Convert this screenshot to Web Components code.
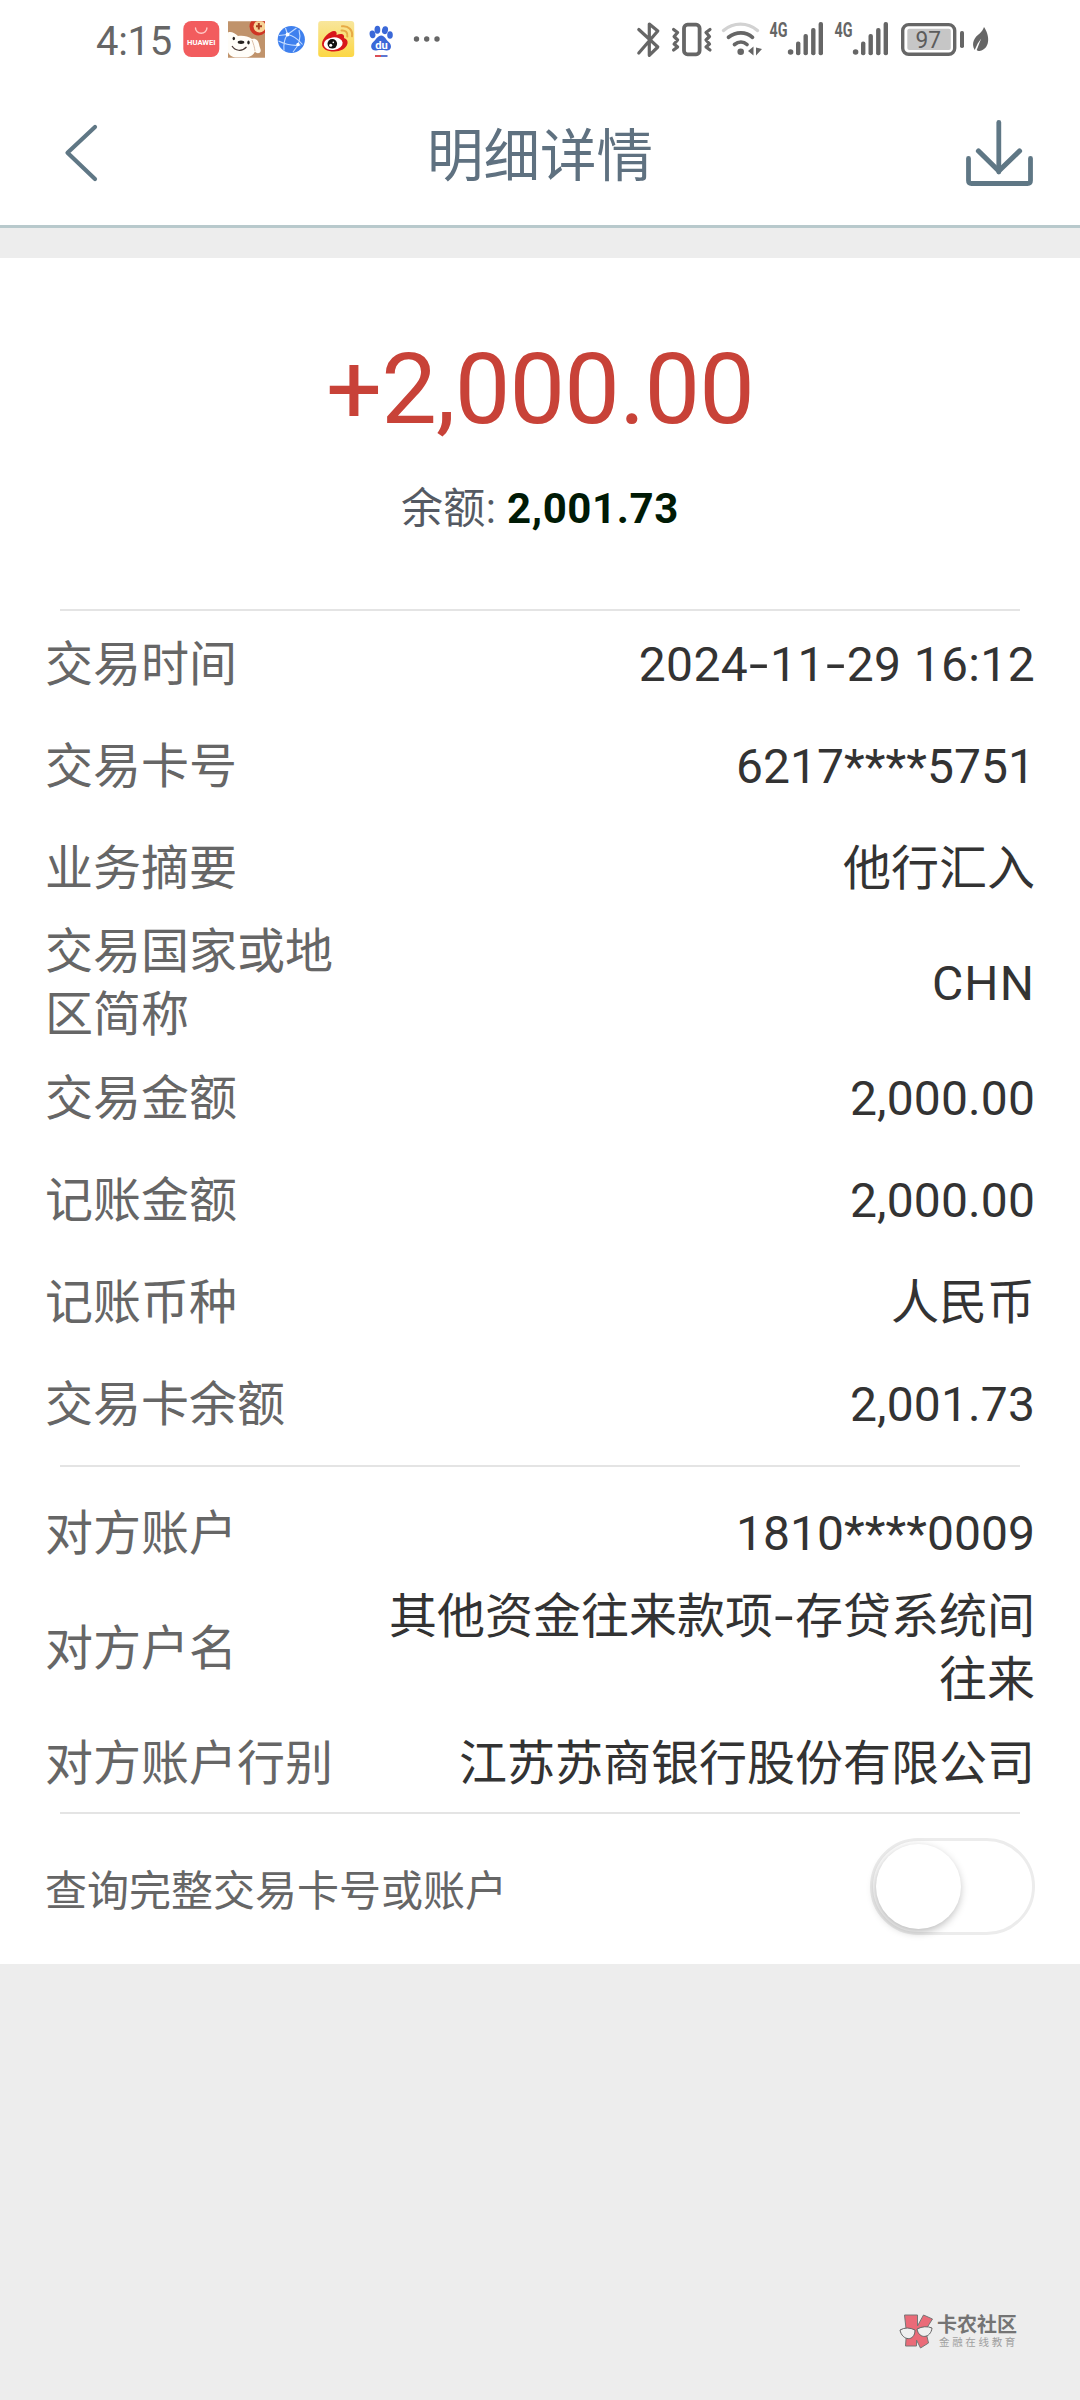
<!DOCTYPE html>
<html lang="zh-CN">
<head>
<meta charset="utf-8">
<title>明细详情</title>
<style>
  html, body { margin: 0; padding: 0; }
  body { background: #ededed; font-family: Roboto, "Noto Sans CJK SC", sans-serif; width: 1080px; height: 2400px; overflow: hidden; }
</style>
</head>
<body>
<bank-app></bank-app>
<script>
const define = (name, html, extra) => customElements.define(name, class extends HTMLElement {
  constructor() {
    super();
    this.attachShadow({ mode: 'open' }).innerHTML = html;
  }
  connectedCallback() { if (extra) extra.call(this, this.shadowRoot); }
});

/* Sets its text to a given advance width by spreading the letters */
define('fit-text', `<style>:host{display:inline-block;white-space:pre}span{display:inline-block}</style><span><slot></slot></span>`,
  function (root) {
    const s = root.querySelector('span');
    const w = parseFloat(this.getAttribute('w'));
    const n = this.textContent.length;
    const ls = (w - s.getBoundingClientRect().width) / n;
    s.style.letterSpacing = ls + 'px';
  });

const signal = (x) => `
  <svg width="57" height="80" viewBox="${x} 0 57 80" fill="#666">
    <text x="${x + 1.5}" y="37" font-size="20.5" font-weight="700" textLength="18" lengthAdjust="spacingAndGlyphs">4G</text>
    <circle cx="${x + 22.6}" cy="52" r="2.8"/>
    <rect x="${x + 28}" y="41.5" width="4.4" height="13.7" rx="2"/>
    <rect x="${x + 35.5}" y="34" width="4.4" height="21.2" rx="2"/>
    <rect x="${x + 43.1}" y="28" width="4.4" height="27.2" rx="2"/>
    <rect x="${x + 50.6}" y="22" width="4.4" height="33.2" rx="2"/>
  </svg>`;

define('status-bar', `
<style>
  :host{display:flex;height:80px;box-sizing:border-box;padding-left:96px;background:#fff;color:#666;align-items:flex-start}
  svg{display:block;flex:none;overflow:visible}
  fit-text{font-size:40px;line-height:80px;margin-top:2px;height:78px;margin-right:11px}
  .g{display:flex}
  .r{margin-left:195px}
</style>
<fit-text w="76">4:15</fit-text>
<div class="g">
  <svg width="37" height="80" viewBox="183 0 37 80" style="margin-right:8px">
    <rect x="183.3" y="21" width="36" height="36" rx="8" fill="#f25c5e"/>
    <path d="M195.5 28a5.7 5.2 0 0 0 11.4 0" fill="none" stroke="#ffc9c6" stroke-width="1.4" stroke-linecap="round"/>
    <text x="187" y="44.7" font-size="6.8" font-weight="700" fill="#fff" textLength="28.6" lengthAdjust="spacingAndGlyphs">HUAWEI</text>
  </svg>
  <svg width="38" height="80" viewBox="228 0 38 80" style="margin-right:11px">
    <clipPath id="jd"><rect x="228" y="21.3" width="37" height="36.4"/></clipPath>
    <g clip-path="url(#jd)">
      <rect x="228" y="21" width="37" height="37" fill="#c0936b"/>
      <circle cx="258.5" cy="26.5" r="9" fill="#cf3524"/>
      <circle cx="259.5" cy="26.5" r="6" fill="#f7d397"/>
      <path d="M258.8 23v6.6M256 26.3h6" stroke="#a9401f" stroke-width="2"/>
      <path d="M227 33c3-2.500 8 0 11 3 5-.5 10 0 14 3 4-1 6 1 7 5 .5 4 3 6 1 8.500-2 1.500-4 .5-5-1-1 3-4 5-8 6h-12c-5-1-8-5-8-10z" fill="#fffdf8"/>
      <path d="M252 40c1.500 4 2.500 7 3 11" fill="none" stroke="#d7b9a0" stroke-width=".9"/>
      <ellipse cx="241" cy="42.300" rx="3.300" ry="1.700" fill="#25211f"/>
      <ellipse cx="233.800" cy="38.500" rx="1.200" ry="1.700" fill="#25211f"/>
      <ellipse cx="248.500" cy="42.500" rx="1.200" ry="1.900" fill="#25211f"/>
      <path d="M232 46c3 5 10 6 14.500 1" fill="none" stroke="#463733" stroke-width="1.200"/>
    </g>
  </svg>
  <svg width="28" height="80" viewBox="277 0 28 80" style="margin-right:13px">
    <circle cx="291.300" cy="39.500" r="13.600" fill="#3f80ee"/>
    <g fill="none" stroke="#c5dcff" stroke-width="1.100">
      <path d="M287.500 34.500l9-6.500M287.500 34.500l-8.500 1M287.500 34.500l-2-6.500M287.500 34.500c5 1 11 5 15 10M287.500 34.500c-3 4-4 10-3.500 16M278.500 41c8 4 15 5 22 4M299 30c2 7 .5 15-6 22"/>
    </g>
    <circle cx="287.500" cy="34.500" r="1.900" fill="#fff"/><circle cx="298" cy="44.500" r="1.700" fill="#fff"/>
  </svg>
  <svg width="37" height="80" viewBox="318 0 37 80" style="margin-right:14px">
    <defs><linearGradient id="wb" x1="0" y1="0" x2="0" y2="1"><stop offset="0" stop-color="#f8e69c"/><stop offset="1" stop-color="#fcd745"/></linearGradient></defs>
    <rect x="318.200" y="21" width="36" height="36" rx="3" fill="url(#wb)"/>
    <path d="M322 44c0-6 8-13 12-13 2.500 0 3 2 2.500 4 4-2 8.500-1.500 7.500 3 3 1 4 3 3.500 5.500-1 5-7 8-13.500 8s-12-2.500-12-7.500z" fill="#d8161b"/>
    <ellipse cx="333.200" cy="43.700" rx="9.500" ry="6.300" fill="#fff" transform="rotate(-7 333.200 43.700)"/>
    <circle cx="332.300" cy="43.800" r="4.800" fill="#111"/><circle cx="330.700" cy="45.300" r="1.500" fill="#fff"/><circle cx="333.300" cy="42.400" r=".8" fill="#fff"/>
    <path d="M341.500 30.500c4-.5 6.500 2 5.800 6M342 26.300c6.500-.8 11 3.800 10 10" fill="none" stroke="#e7aa45" stroke-width="2" stroke-linecap="round"/>
  </svg>
  <svg width="25" height="80" viewBox="369 0 25 80" style="margin-right:19px">
    <g fill="#3a68d8">
      <ellipse cx="372.500" cy="34.300" rx="2.900" ry="3.900" transform="rotate(-10 372.500 34.300)"/>
      <ellipse cx="377.400" cy="29.800" rx="2.900" ry="4"/>
      <ellipse cx="385" cy="30.200" rx="3" ry="4" transform="rotate(12 385 30.200)"/>
      <ellipse cx="390" cy="35" rx="2.800" ry="3.800"/>
      <path d="M381.200 35.500c3.500 0 4.500 4 7.500 6.500 4 3.500 2.500 9-2.500 8.500-3.500-.6-6.500-.6-10 0-5 .5-6.800-5-3-8.500 3-2.500 4.500-6.500 8-6.500z"/>
    </g>
    <text x="375.200" y="48.500" font-size="10.500" font-weight="700" fill="#fff" textLength="12.500" lengthAdjust="spacingAndGlyphs">du</text>
    <path d="M375 56h6" stroke="#d93c43" stroke-width="1.800"/><path d="M381 56h6.500" stroke="#4a68cf" stroke-width="1.800"/>
  </svg>
  <svg width="28" height="80" viewBox="413 0 28 80" fill="#666"><circle cx="416.500" cy="39" r="2.700"/><circle cx="426.700" cy="39" r="2.700"/><circle cx="437" cy="39" r="2.700"/></svg>
</div>
<div class="g r">
  <svg width="26" height="80" viewBox="636 0 26 80" style="margin-right:9px">
    <path d="M638.800 29.500l19 17.500-8.500 8.300V24l8.500 7-19 22" fill="none" stroke="#666" stroke-width="3.200" stroke-linejoin="round" stroke-linecap="round"/>
  </svg>
  <svg width="41" height="80" viewBox="671 0 41 80" style="margin-right:8px" fill="none" stroke="#666">
    <rect x="684" y="24.700" width="15.600" height="29.600" rx="3.500" stroke-width="3.800"/>
    <path d="M673.600 29.500l4 3-3.500 4 3.500 3.500-3.500 4 3.500 3-4 3M710 29.500l-4 3 3.500 4-3.500 3.500 3.500 4-3.500 3 4 3" stroke-width="3.200" stroke-linejoin="round" stroke-linecap="round"/>
  </svg>
  <svg width="44" height="80" viewBox="720 0 44 80" style="margin-right:4px" fill="none" stroke-linecap="round">
    <path d="M723.500 30.500c10-8.500 24-8.500 34 0" stroke="#d2d2d2" stroke-width="3.400"/>
    <path d="M728.500 37.300c7.500-6 17.500-6 24 0" stroke="#666" stroke-width="3.700"/>
    <path d="M734.500 44.500c4-3.300 9-3.300 12.500 0" stroke="#666" stroke-width="3.700"/>
    <circle cx="740.700" cy="51.700" r="3.300" fill="#666"/>
    <path d="M753.500 46.500v9l-5.500-4.500zM756 47.500v8l6-6.500z" fill="#666"/>
  </svg>
  ${signal(768)}
  <span style="width:8px"></span>
  ${signal(833)}
  <svg width="66" height="80" viewBox="900 0 66 80" style="margin-left:10px;margin-right:5px">
    <rect x="902.700" y="24.600" width="52" height="29.600" rx="6" fill="none" stroke="#666" stroke-width="3.400"/>
    <rect x="907.300" y="28.800" width="43.500" height="21.200" rx="2" fill="#c6c6c6"/>
    <text x="915.500" y="48.300" font-size="23.500" fill="#5c5c5c" textLength="25.500" lengthAdjust="spacingAndGlyphs">97</text>
    <rect x="960" y="31" width="4" height="17" rx="1.800" fill="#666"/>
  </svg>
  <svg width="19" height="80" viewBox="971 0 19 80">
    <path d="M984 27c5.500 8 6.500 20-2.500 23.500-2 .8-4 .2-4.800-.6l2.500-6.500 2-5-3.500 5-3 6.500c-4-7 0-13 5-16.500 2-1.500 3.500-4 4.300-6.400z" fill="#666"/>
  </svg>
</div>`);

define('title-bar', `
<style>
  :host{display:flex;height:148px;box-sizing:border-box;border-bottom:3px solid #b8c9cc;background:#fff;color:#5f7180;justify-content:space-between;padding:0 44px 0 60px}
  svg{display:block;overflow:visible}
  h1{margin:0;font-size:56.500px;font-weight:400;line-height:145px;height:140px;padding-top:5px}
</style>
<svg width="60" height="120" viewBox="60 80 60 120"><path d="M95 127L67.500 152.700 95 179" fill="none" stroke="#5f7785" stroke-width="4.200" stroke-linecap="round" stroke-linejoin="round"/></svg>
<h1><slot></slot></h1>
<svg width="76" height="120" viewBox="960 80 76 120" fill="none" stroke="#5f7785" stroke-linecap="round" stroke-linejoin="round">
  <path d="M998.800 122.500V172" stroke-width="4.800"/><path d="M978.500 151L998.800 171 1019.500 151" stroke-width="5.200"/>
  <path d="M968.500 158.500V180.500q0 3 3 3H1027.500q3 0 3-3V158.500" stroke-width="4.800"/>
</svg>`);

define('amount-summary', `
<style>
  :host{display:flex;flex-direction:column;align-items:center;height:351px;box-sizing:border-box}
  .amt{color:#c84238;font-size:99px;line-height:120px;height:120px;margin-top:71px}
  .bal{display:flex;color:#555a63;font-size:42px;line-height:60px;margin-top:30px}
  .bal b{color:#001a05}
</style>
<div class="amt"><fit-text w="428">+2,000.00</fit-text></div>
<div class="bal"><fit-text w="106">余额: </fit-text><b><fit-text w="172">2,001.73</fit-text></b></div>`);

define('detail-row', `
<style>
  :host{display:flex;box-sizing:border-box;height:102px;padding:2px 45px 0 45px;align-items:center;justify-content:space-between;font-size:48px;line-height:63px}
  :host([tall]){height:128px}
  .l{color:#666;width:300px;flex:none}
  .v{color:#333;width:660px;text-align:right}
</style>
<div class="l"><slot name="label"></slot></div><div class="v"><slot></slot></div>`);

define('thin-rule', `<style>:host{display:block;height:2px;margin:0 60px;background:#e4e4e4}</style>`);

define('toggle-switch', `
<style>
  :host{display:flex;box-sizing:border-box;width:165px;height:97px;border:3px solid #ececec;border-radius:49px;padding:3px 0 0 3px;background:#fff}
  i{display:block;width:85px;height:85px;border-radius:50%;background:#fff;box-shadow:-1px 3px 8px rgba(0,0,0,.28)}
</style><i></i>`);

define('switch-row', `
<style>
  :host{display:flex;box-sizing:border-box;height:150px;padding:0 45px;justify-content:space-between;font-size:42px;color:#666}
  span{line-height:60px;padding-top:48px}
  toggle-switch{margin-top:24px}
</style><span><slot></slot></span><toggle-switch></toggle-switch>`);

define('brand-mark', `
<style>
  :host{display:flex;gap:4px;align-items:flex-start}
  svg{display:block;overflow:visible}
  .t{display:flex;flex-direction:column}
  .a{font-size:20px;font-weight:700;line-height:22px;color:#747474;padding-top:1px}
  .b{font-size:10.500px;line-height:14px;color:#a0a0a0;padding-left:2px}
</style>
<svg width="34" height="35" viewBox="900 2312 34 35">
  <path d="M905.500 2314h13v11l6-11 9 4-7 11 3 13-8 5-4-8v6h-11l1-13z" fill="#ea6b78" stroke="#777" stroke-width="1"/>
  <path d="M901 2329q7-4 15 0c0 12-13 11-15 0zM918 2328q8-4 15-1c-1 10-13 12-15 1z" fill="#efefef" stroke="#666" stroke-width="1"/>
</svg>
<div class="t"><div class="a">卡农社区</div><div class="b"><fit-text w="79">金融在线教育</fit-text></div></div>`);

define('bank-app', `
<style>
  :host{display:flex;flex-direction:column;width:1080px;height:2400px;background:#ededed}
  main{display:block;background:#fff;margin-top:30px;height:1706px;box-sizing:border-box}
  footer{display:flex;justify-content:flex-end;margin-top:349px;padding-right:62px}
  .dash{display:inline-block;width:22px;text-align:center;transform:scaleX(1.45)}
</style>
<status-bar></status-bar>
<title-bar>明细详情</title-bar>
<main>
  <amount-summary></amount-summary>
  <thin-rule></thin-rule>
  <detail-row style="margin-top:1px"><span slot="label">交易时间</span><fit-text w="397">2024<span class="dash">-</span>11<span class="dash">-</span>29 16:12</fit-text></detail-row>
  <detail-row><span slot="label">交易卡号</span><fit-text w="299">6217****5751</fit-text></detail-row>
  <detail-row><span slot="label">业务摘要</span>他行汇入</detail-row>
  <detail-row tall><span slot="label">交易国家或地区简称</span><fit-text w="103">CHN</fit-text></detail-row>
  <detail-row><span slot="label">交易金额</span><fit-text w="185">2,000.00</fit-text></detail-row>
  <detail-row><span slot="label">记账金额</span><fit-text w="185">2,000.00</fit-text></detail-row>
  <detail-row><span slot="label">记账币种</span>人民币</detail-row>
  <detail-row><span slot="label">交易卡余额</span><fit-text w="185">2,001.73</fit-text></detail-row>
  <thin-rule style="margin-top:11px"></thin-rule>
  <detail-row style="margin-top:14px"><span slot="label">对方账户</span><fit-text w="299">1810****0009</fit-text></detail-row>
  <detail-row tall><span slot="label">对方户名</span>其他资金往来款项<span class="dash">-</span>存贷系统间往来</detail-row>
  <detail-row><span slot="label">对方账户行别</span>江苏苏商银行股份有限公司</detail-row>
  <thin-rule style="margin-top:-1px"></thin-rule>
  <switch-row>查询完整交易卡号或账户</switch-row>
</main>
<footer><brand-mark></brand-mark></footer>`);
</script>
</body>
</html>
